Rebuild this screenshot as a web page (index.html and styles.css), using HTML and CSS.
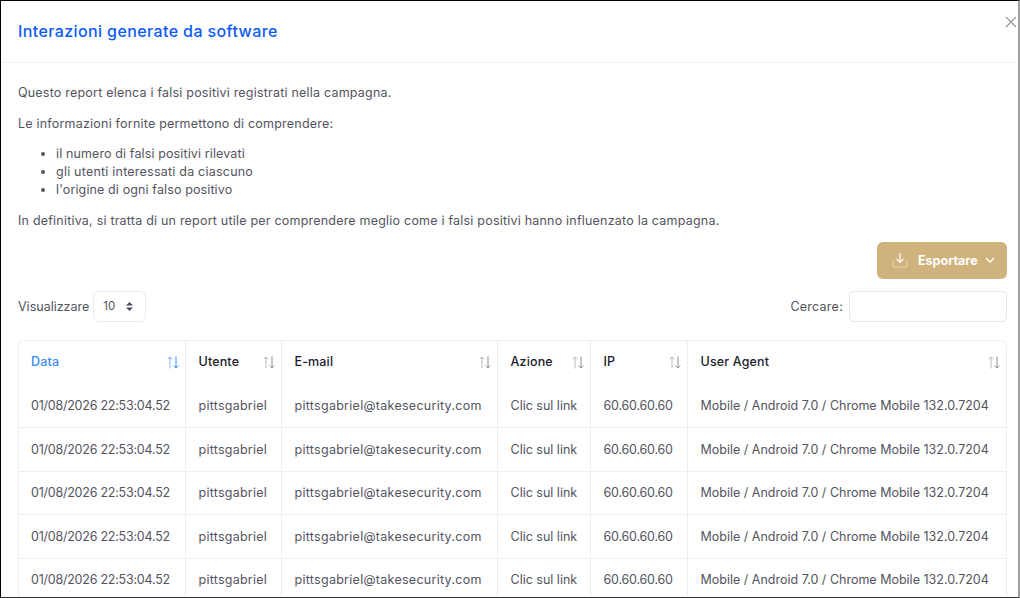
FILE: index.html
```html
<!DOCTYPE html>
<html lang="it">
  <head>
    <meta charset="UTF-8" />
    <title>Interazioni generate da software</title>
    <link rel="stylesheet" href="styles.css">
  </head>
  <body>
    <div class="modal">
      <div class="modal-header">
        <h1>Interazioni generate da software</h1>
        <button class="close-button" type="button" aria-label="Chiudi">
          <svg width="12" height="12" viewBox="0 0 12 12"><path d="M1 1l10 10M11 1L1 11" /></svg>
        </button>
      </div>
      <div class="modal-body">
        <p>Questo report elenca i falsi positivi registrati nella campagna.</p>
        <p>Le informazioni fornite permettono di comprendere:</p>
        <ul>
          <li>il numero di falsi positivi rilevati</li>
          <li>gli utenti interessati da ciascuno</li>
          <li>l'origine di ogni falso positivo</li>
        </ul>
        <p>In definitiva, si tratta di un report utile per comprendere meglio come i falsi positivi hanno influenzato la campagna.</p>

        <div class="export-row">
          <button class="export-button" type="button">
            <svg class="export-icon" width="16" height="16" viewBox="0 0 16 16">
              <path class="faded" d="M1 9v4a2 2 0 0 0 2 2h10a2 2 0 0 0 2-2V9" />
              <path d="M8 1v9M4.5 7L8 10.5 11.5 7" />
            </svg>
            <span>Esportare</span>
            <svg class="chevron" width="10" height="6" viewBox="0 0 10 6"><path d="M1 1l4 4 4-4" /></svg>
          </button>
        </div>

        <div class="controls">
          <label class="length-control">
            Visualizzare
            <span class="select-box">
              10
              <svg width="7" height="9" viewBox="0 0 7 9"><path d="M3.5 0L7 3.4H0zM3.5 9L0 5.6h7z" /></svg>
            </span>
          </label>
          <label class="search-control">
            Cercare:
            <input type="text" />
          </label>
        </div>

        <div class="table-wrap">
          <table>
            <colgroup>
              <col class="col-data" />
              <col class="col-utente" />
              <col class="col-email" />
              <col class="col-azione" />
              <col class="col-ip" />
              <col class="col-agent" />
            </colgroup>
            <thead>
              <tr>
                <th class="sorted">Data<svg class="sort" width="12" height="13" viewBox="0 0 12 13"><path class="up" d="M3 12.5V1M.7 3.4L3 1l2.3 2.4" /><path class="down" d="M9 .5V12M6.7 9.6L9 12l2.3-2.4" /></svg></th>
                <th>Utente<svg class="sort" width="12" height="13" viewBox="0 0 12 13"><path class="up" d="M3 12.5V1M.7 3.4L3 1l2.3 2.4" /><path class="down" d="M9 .5V12M6.7 9.6L9 12l2.3-2.4" /></svg></th>
                <th>E-mail<svg class="sort" width="12" height="13" viewBox="0 0 12 13"><path class="up" d="M3 12.5V1M.7 3.4L3 1l2.3 2.4" /><path class="down" d="M9 .5V12M6.7 9.6L9 12l2.3-2.4" /></svg></th>
                <th>Azione<svg class="sort" width="12" height="13" viewBox="0 0 12 13"><path class="up" d="M3 12.5V1M.7 3.4L3 1l2.3 2.4" /><path class="down" d="M9 .5V12M6.7 9.6L9 12l2.3-2.4" /></svg></th>
                <th>IP<svg class="sort" width="12" height="13" viewBox="0 0 12 13"><path class="up" d="M3 12.5V1M.7 3.4L3 1l2.3 2.4" /><path class="down" d="M9 .5V12M6.7 9.6L9 12l2.3-2.4" /></svg></th>
                <th>User Agent<svg class="sort" width="12" height="13" viewBox="0 0 12 13"><path class="up" d="M3 12.5V1M.7 3.4L3 1l2.3 2.4" /><path class="down" d="M9 .5V12M6.7 9.6L9 12l2.3-2.4" /></svg></th>
              </tr>
            </thead>
            <tbody>
              <tr><td>01/08/2026 22:53:04.52</td><td>pittsgabriel</td><td>pittsgabriel@takesecurity.com</td><td>Clic sul link</td><td>60.60.60.60</td><td>Mobile / Android 7.0 / Chrome Mobile 132.0.7204</td></tr>
              <tr><td>01/08/2026 22:53:04.52</td><td>pittsgabriel</td><td>pittsgabriel@takesecurity.com</td><td>Clic sul link</td><td>60.60.60.60</td><td>Mobile / Android 7.0 / Chrome Mobile 132.0.7204</td></tr>
              <tr><td>01/08/2026 22:53:04.52</td><td>pittsgabriel</td><td>pittsgabriel@takesecurity.com</td><td>Clic sul link</td><td>60.60.60.60</td><td>Mobile / Android 7.0 / Chrome Mobile 132.0.7204</td></tr>
              <tr><td>01/08/2026 22:53:04.52</td><td>pittsgabriel</td><td>pittsgabriel@takesecurity.com</td><td>Clic sul link</td><td>60.60.60.60</td><td>Mobile / Android 7.0 / Chrome Mobile 132.0.7204</td></tr>
              <tr><td>01/08/2026 22:53:04.52</td><td>pittsgabriel</td><td>pittsgabriel@takesecurity.com</td><td>Clic sul link</td><td>60.60.60.60</td><td>Mobile / Android 7.0 / Chrome Mobile 132.0.7204</td></tr>
            </tbody>
          </table>
        </div>
      </div>
    </div>
  </body>
</html>
```

FILE: styles.css
```css
html,
body {
  height: 100%;
}
body {
  margin: 0;
  overflow: hidden;
  background: #ffffff;
  color: #54545f;
  font-family: "Inter", "Open Sans", sans-serif;
  font-size: 12.5px;
}
.modal {
  box-sizing: border-box;
  height: 598px;
  overflow: hidden;
  border-top: 1px solid #000000;
  border-left: 1px solid #000000;
  border-right: 2px solid #a0a0a0;
  border-bottom: 1px solid #333333;
}
.modal-header {
  display: flex;
  justify-content: space-between;
  height: 61px;
  border-bottom: 1px solid #eff2f5;
  padding-left: 17px;
}
.modal-header h1 {
  margin: 0;
  padding-top: 20px;
  font-size: 16px;
  font-weight: 500;
  line-height: 20px;
  letter-spacing: 0.39px;
  color: #0d5cf5;
}
.close-button {
  align-self: flex-start;
  margin: 15px 1px 0 0;
  padding: 0;
  border: none;
  background: none;
  height: 12px;
  cursor: pointer;
}
.close-button svg {
  display: block;
}
.close-button path {
  fill: none;
  stroke: #9a9aa4;
  stroke-width: 1.3;
}
.modal-body {
  padding: 21px 11px 0 17px;
}
.modal-body p {
  margin: 0 0 12.5px;
  line-height: 18px;
  letter-spacing: 0.21px;
}
.modal-body ul {
  margin: 0 0 12.5px;
  padding-left: 38px;
  line-height: 18px;
  letter-spacing: 0.12px;
}
.modal-body li:nth-child(2) {
  letter-spacing: 0.22px;
}
.export-row {
  display: flex;
  justify-content: flex-end;
  margin-top: -0.5px;
}
.export-button {
  display: flex;
  align-items: center;
  width: 130px;
  height: 37px;
  padding: 0 12px 0 15px;
  border: none;
  border-radius: 6px;
  background: #cfb27c;
  color: #ffffff;
  font: inherit;
  font-weight: 700;
  cursor: pointer;
}
.export-icon {
  margin-right: 10px;
}
.export-icon path {
  fill: none;
  stroke: #ffffff;
  stroke-width: 1.2;
}
.export-icon .faded {
  opacity: 0.4;
}
.chevron {
  margin-left: auto;
}
.chevron path {
  fill: none;
  stroke: #ffffff;
  stroke-width: 1.3;
}
.controls {
  display: flex;
  justify-content: space-between;
  align-items: center;
  margin-top: 12px;
}
.length-control,
.search-control {
  display: flex;
  align-items: center;
  gap: 4px;
}
.search-control {
  letter-spacing: 0.25px;
}
.select-box {
  box-sizing: border-box;
  display: flex;
  align-items: center;
  justify-content: space-between;
  width: 53px;
  height: 31px;
  padding: 0 12px 0 9px;
  border: 1px solid #e9e9f2;
  border-radius: 6px;
  font-size: 11.5px;
}
.select-box svg {
  fill: #4b4b5a;
}
.search-control input {
  box-sizing: border-box;
  width: 158px;
  height: 31px;
  margin-left: 2px;
  border: 1px solid #e4e6f3;
  border-radius: 4px;
  outline: none;
}
.table-wrap {
  margin-top: 18px;
  border: 1px solid #eeeef4;
  border-bottom: none;
  border-radius: 6px 6px 0 0;
}
table {
  width: 100%;
  table-layout: fixed;
  border-collapse: collapse;
}
.col-data { width: 166px; }
.col-utente { width: 96px; }
.col-email { width: 216px; }
.col-azione { width: 93px; }
.col-ip { width: 97px; }
th,
td {
  padding: 0 12px 0 13px;
  text-align: left;
  white-space: nowrap;
  overflow: hidden;
  border-left: 1px solid #eeeef4;
}
th:first-child,
td:first-child {
  padding-left: 12px;
  border-left: none;
}
th {
  position: relative;
  height: 42px;
  padding-bottom: 2px;
  color: #1c1c2e;
  font-weight: 500;
  letter-spacing: 0.15px;
}
td {
  height: 42.5px;
  border-top: 1px solid #eeeef4;
}
tbody tr:first-child td {
  border-top: none;
}
td:nth-child(1) {
  letter-spacing: -0.23px;
}
td:nth-child(2) {
  letter-spacing: 0.25px;
}
td:nth-child(3) {
  letter-spacing: 0.28px;
}
td:nth-child(5) {
  letter-spacing: -0.2px;
}
th.sorted {
  color: #3a8cf0;
}
.sort {
  position: absolute;
  right: 6px;
  top: 15px;
  fill: none;
  stroke: #8f8f99;
  stroke-width: 1;
}
.sort .up {
  opacity: 0.6;
}
.sorted .sort {
  stroke: #3a8cf0;
}
```
